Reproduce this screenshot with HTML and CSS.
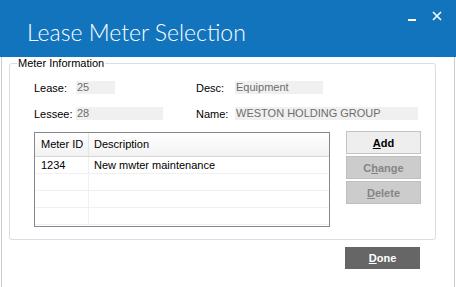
FILE: index.html
```html
<!DOCTYPE html>
<html lang="en">
<head>
    <meta charset="UTF-8">
    <title>Lease Meter Selection</title>
    <link rel="stylesheet" href="styles.css">
</head>
<body>
    <div class="window">
        <div class="titlebar">
            <span class="title">Lease Meter Selection</span>
            <div class="window-buttons">
                <span class="min-btn"></span>
                <svg class="close-btn" width="10" height="10" viewBox="0 0 10 10">
                    <path d="M1 1 L9 9 M9 1 L1 9" stroke="#fff" stroke-width="1.6"/>
                </svg>
            </div>
        </div>

        <div class="content">
            <fieldset class="group">
                <legend>Meter Information</legend>

                <div class="info-row">
                    <span class="label">Lease:</span>
                    <div class="cell"><span class="value short">25</span></div>
                    <span class="label label-right">Desc:</span>
                    <span class="value medium">Equipment</span>
                </div>
                <div class="info-row">
                    <span class="label">Lessee:</span>
                    <div class="cell"><span class="value wide">28</span></div>
                    <span class="label label-right">Name:</span>
                    <span class="value long">WESTON HOLDING GROUP</span>
                </div>

                <div class="meter-area">
                    <div class="grid">
                        <div class="grid-row header">
                            <div class="col-id">Meter ID</div>
                            <div class="col-desc">Description</div>
                        </div>
                        <div class="grid-row">
                            <div class="col-id">1234</div>
                            <div class="col-desc">New mwter maintenance</div>
                        </div>
                        <div class="grid-row"><div class="col-id"></div><div class="col-desc"></div></div>
                        <div class="grid-row"><div class="col-id"></div><div class="col-desc"></div></div>
                        <div class="grid-row"><div class="col-id"></div><div class="col-desc"></div></div>
                    </div>

                    <div class="side-buttons">
                        <button class="btn"><u>A</u>dd</button>
                        <button class="btn" disabled>C<u>h</u>ange</button>
                        <button class="btn" disabled><u>D</u>elete</button>
                    </div>
                </div>
            </fieldset>

            <div class="footer">
                <button class="done-btn"><u>D</u>one</button>
            </div>
        </div>
    </div>
</body>
</html>
```

FILE: styles.css
```css
body {
    margin: 0;
    font-family: "Liberation Sans", Arial, sans-serif;
    font-size: 11px;
    background: #fff;
}
.window {
    width: 456px;
    height: 287px;
    box-sizing: border-box;
    background: #fff;
}
.titlebar {
    height: 57px;
    background-color: #1274bd;
    color: #fff;
    display: flex;
    justify-content: space-between;
    align-items: flex-start;
}
.title {
    font-family: "Lato", "Open Sans", sans-serif;
    font-weight: 300;
    font-size: 23px;
    margin: 18px 0 0 27px;
}
.window-buttons {
    display: flex;
    align-items: center;
    gap: 16px;
    margin: 11px 14px 0 0;
}
.min-btn {
    width: 8px;
    height: 2px;
    background: #fff;
    margin-top: 8px;
}
.content {
    height: 230px;
    margin: 0 1px;
    border: 1px solid #cccccc;
    border-top: none;
}
.group {
    margin: 0 0 0 7px;
    width: 427px;
    height: 183px;
    box-sizing: border-box;
    border: 1px solid #d5dfe5;
    border-radius: 3px;
    padding: 0;
}
.group legend {
    padding: 0 1px;
    margin-left: 7px;
    color: #000;
    line-height: 12px;
}
.info-row {
    display: flex;
    align-items: center;
    padding-left: 24px;
    height: 13px;
    margin-top: 12px;
    color: #000;
}
.info-row + .info-row {
    margin-top: 13px;
}
.label {
    width: 42px;
}
.label-right {
    width: 39px;
}
.cell {
    width: 120px;
}
.value {
    display: block;
    height: 13px;
    line-height: 13px;
    background: #f0f0f0;
    color: #6d6d6d;
    padding-left: 1px;
}
.short { width: 38px; }
.wide { width: 86px; }
.medium { width: 87px; }
.long { width: 182px; }

.meter-area {
    display: flex;
    align-items: flex-start;
    margin: 12px 0 0 24px;
}
.grid {
    width: 296px;
    height: 95px;
    box-sizing: border-box;
    border: 1px solid #828790;
    overflow: hidden;
}
.grid-row {
    display: flex;
    height: 17px;
    box-sizing: border-box;
    border-bottom: 1px solid #f0f0f0;
    line-height: 16px;
}
.grid-row.header {
    height: 24px;
    line-height: 23px;
    background: linear-gradient(#ffffff, #f2f2f2);
    border-bottom: 1px solid #d5d5d5;
}
.col-id {
    width: 54px;
    padding-left: 6px;
    box-sizing: border-box;
    border-right: 1px solid #f0f0f0;
}
.header .col-id {
    border-right: 1px solid #e3e5e8;
}
.col-desc {
    padding-left: 5px;
}
.side-buttons {
    display: flex;
    flex-direction: column;
    gap: 2px;
    margin: -1px 0 0 16px;
}
.btn {
    width: 75px;
    height: 23px;
    font-family: "Liberation Sans", Arial, sans-serif;
    font-size: 11px;
    font-weight: bold;
    color: #000;
    background: #eeeeee;
    border: 1px solid #c4c4c4;
    padding: 0;
}
.btn:disabled {
    background: #cccccc;
    border-color: #bfbfbf;
    color: #858585;
}
.footer {
    display: flex;
    justify-content: flex-end;
    padding: 7px 34px 0 0;
}
.done-btn {
    width: 75px;
    height: 22px;
    font-family: "Liberation Sans", Arial, sans-serif;
    font-size: 11px;
    font-weight: bold;
    color: #fff;
    background: #666666;
    border: none;
    padding: 0;
}
```
